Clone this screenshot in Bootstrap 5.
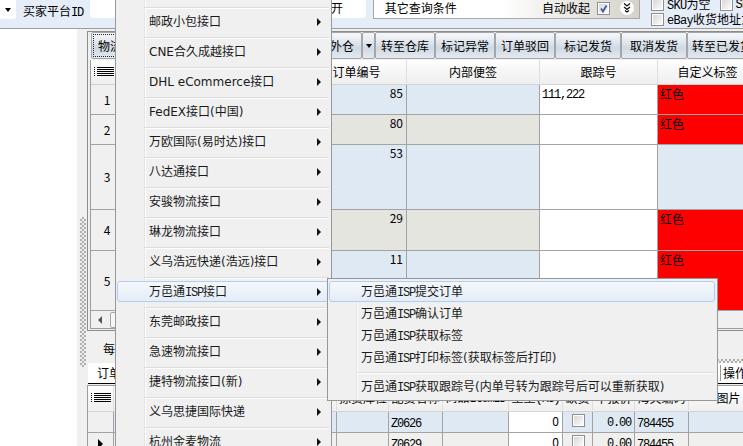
<!DOCTYPE html>
<html lang="zh-CN">
<head>
<meta charset="utf-8">
<title>订单管理</title>
<link rel="stylesheet" href="https://cdn.jsdelivr.net/npm/bootstrap@5.3.0/dist/css/bootstrap.min.css">
<style>
html,body{margin:0;width:743px;height:446px;overflow:hidden;background:#f0f0f0}
body{font:12px/16px "Noto Sans CJK SC","Liberation Sans",sans-serif;color:#000}
.lat{font-family:"Liberation Mono","Noto Sans CJK SC",monospace;letter-spacing:-1.2px}
.desk{width:743px;height:446px;position:relative;overflow:hidden}
.topbar{height:29px;background:#e5edf9;border-bottom:1px solid #9c9c9c;overflow:hidden}
.sel-end{width:16px;height:19px;background:#fff;border-radius:0 0 3px 0}
.caret-d{border-left:3px solid transparent;border-right:3px solid transparent;border-top:4px solid #000;margin-top:1px}
.lbl-id{margin:3px 8px 0 7px;width:59px;white-space:nowrap}
.inp{width:276px;height:18px;background:#fff;border-radius:0 0 3px 3px;padding:0 0 0 241px}
.qpanel{margin-left:7px;width:268px;height:19px;background:linear-gradient(90deg,#fff 0,#fff 48%,#d5d2ca 100%);border:1px solid #a9a9a9;border-top:0;padding:0 2px 2px 11px;align-items:center}
.qpanel .t2{margin-left:auto;margin-right:7px}
.circ{width:14px;height:14px;border-radius:50%;background:#fff;margin:-1px 3px 0 10px}
.ck{display:inline-block;width:13px;height:13px;flex:none;border:1px solid #8f8f8f;background:linear-gradient(135deg,#d4d4d4,#fff);box-shadow:inset 0 0 0 1px #fff}
.ck svg{display:block}
.ops{margin-left:11px;margin-top:-3px;width:92px;white-space:nowrap}
.ops>div{height:15px;align-items:center}
.ops .ck{margin-right:3px}
.ops .ck.next{margin-left:9px}
.ops .lat{letter-spacing:-.7px}
.mainrow{height:417px}
.leftw{width:77px;background:#fff}
.gutter{width:10px;background:#f0f0f0;padding-left:3px}
.dots{width:6px;height:150px;margin-top:188px;background:repeating-conic-gradient(#adadad 0 25%,#f0f0f0 0 50%) 0 0/4px 4px}
.content{width:656px}
.frame{margin-top:2px;border:1px solid #8c8c8c;border-right:0;padding:0 0 1px 2px}
.tools{height:28px;padding-left:1px}
.tb{height:27px;padding:0;font-size:12px;line-height:14px;color:#000;border:1px solid #a4a6a9;border-radius:2px;flex:none;white-space:nowrap;background:linear-gradient(#f5f7fa 0,#e9edf2 25%,#cfd8e3 60%,#e4e9ef 100%)}
.tb.first{width:207px;text-align:left;padding-left:6px;outline:1px dotted #222;outline-offset:-3px}
.tb.w64{width:64px}.tb.w13{width:13px}.tb.w60{width:60px}.tb.w66{width:66px}.tb.w70{width:70px}
.tb.arrow{display:flex;align-items:center;justify-content:center}
.gridwrap{border:1px solid #9c9c9c;border-width:0 0 1px 1px;overflow:hidden}
.gt.table{table-layout:fixed;margin:0;border-collapse:separate;border-spacing:0}
.gt.table>:not(caption)>*>*{padding:0 2px;border:0;border-right:1px solid #a3a3a3;border-bottom:1px solid #a3a3a3;vertical-align:top;background-color:#f0f0f0;box-shadow:none;color:#000;font-size:12px;line-height:16px;overflow:hidden;white-space:nowrap}
.gt.table>thead>tr>th{font-weight:400;text-align:center;vertical-align:middle;background:linear-gradient(#fff 0,#f6f6f6 45%,#efefef 100%);border-right:1px solid #dedede;border-bottom:1px solid #d4d4d4}
.gt.table>thead>tr>th.ico{padding:0 0 0 3px}
.gt.table>tbody>tr>td.rh{text-align:center;vertical-align:middle;padding:0}
.gt.table>tbody>tr>td.blue{background-color:#dfe9f4}
.gt.table>tbody>tr>td.grey{background-color:#e5e5e0}
.gt.table>tbody>tr>td.wh{background-color:#fff}
.gt.table>tbody>tr>td.red{background-color:#f00;padding-left:2px;padding-top:1px}
.gt.table>tbody>tr>td.lite{background-color:#f0f0ee}
.g1{width:667px}
.g2{width:681px}
.num{text-align:right}
.gt.table>tbody>tr>td.num{padding-right:3px}
.gt.table>tbody>tr>td.pt2{padding-top:2px}
.g2.table>tbody>tr>td.num{padding-top:1px}
.r1{height:30px}.r3{height:65px}.r4{height:41px}.r5{height:60px}.hd1{height:25px}.hd2{height:26px}.r2g{height:18px}
.hlines{display:block}
.sbar{height:17px;background:#f0f0f0;align-items:center}
.sb-l{width:17px;height:17px;display:flex;align-items:center;justify-content:center}
.tri-l{border-top:4px solid transparent;border-bottom:4px solid transparent;border-right:4px solid #555}
.sb-t{width:210px;height:16px;margin-left:2px;border:1px solid #a8a8a8;border-radius:2px;background:linear-gradient(90deg,#f7f7f7,#dcdcdc)}
.pagebar{height:32px}
.pagebar .mei{padding:10px 0 0 16px;height:28px;white-space:nowrap}
.dotline{height:4px;width:300px;margin-left:auto;background:repeating-conic-gradient(#adadad 0 25%,#f0f0f0 0 50%) 0 0/4px 4px}
.tabs{height:23px;margin-left:1px;background:#fff;border-bottom:1px solid #000;align-items:center}
.tabs .one{padding-left:9px}
.tabs .two{margin-left:auto;width:23px;height:16px;border-left:1px solid #9a9a9a;padding-left:2px;overflow:hidden;white-space:nowrap}
.grid2{margin-top:1px;border-top:1px solid #9c9c9c;border-left:1px solid #9c9c9c;overflow:hidden}
.tri-r{display:inline-block;border-top:5px solid transparent;border-bottom:5px solid transparent;border-left:5px solid #000;vertical-align:middle}
.boxck{display:block;margin:2px auto 0 7px;width:13px;height:13px}
.dropdown-menu.m1{position:absolute;left:115px;top:0;width:217px;min-width:0;margin:0;padding:7px 0 0;height:460px;border:0;border-left:1px solid #979797;border-right:1px solid #979797;border-radius:0;font-size:12px;z-index:5;background:linear-gradient(#e4e4e4,#e4e4e4) no-repeat 28px 0/1px 100%,linear-gradient(#fff,#fff) no-repeat 29px 0/1px 100%,#f0f0f0}
.dropdown-menu.m2{position:absolute;left:327px;top:278px;width:391px;min-width:0;margin:0;padding:2px 0;border:1px solid #979797;border-radius:0;font-size:12px;z-index:6;background:linear-gradient(#e4e4e4,#e4e4e4) no-repeat 28px 0/1px 100%,linear-gradient(#fff,#fff) no-repeat 29px 0/1px 100%,#f0f0f0}
.m1 .mit{display:block;height:30px;padding:4px 2px 5px 1px;background:linear-gradient(#dcdcdc,#dcdcdc) no-repeat 29px 0/calc(100% - 31px) 1px,linear-gradient(#fff,#fff) no-repeat 29px 1px/calc(100% - 31px) 1px}
.mi-in{display:flex;align-items:center;height:21px;border:1px solid transparent;border-radius:3px;color:#1a1a1a;white-space:nowrap;font-family:"DejaVu Sans","Noto Sans CJK SC",sans-serif;font-size:12px}
.m1 .mi-in{padding:0 7px 0 31px;justify-content:space-between}
.m2 .mit{display:block;height:22px;padding:0 2px 1px 1px}
.m2 .mi-in{padding-left:31px}
.mi-in>span:not(.tri-m){margin-top:2px}
.mi-in.on{background:linear-gradient(#f5f8fc,#e4ecf7);border-color:#aeceF7}
.tri-m{border-top:4px solid transparent;border-bottom:4px solid transparent;border-left:4px solid #111;flex:none}
.sep2{height:7px;padding:0;margin:0 2px 0 29px;border:0;background:linear-gradient(#dcdcdc,#dcdcdc) no-repeat 0 3px/100% 1px,linear-gradient(#fff,#fff) no-repeat 0 4px/100% 1px;opacity:1}
</style>
</head>
<body>
<div class="desk">
  <div class="topbar d-flex align-items-start">
    <div class="sel-end d-flex align-items-center justify-content-center"><span class="caret-d"></span></div>
    <div class="lbl-id">买家平台<span class="lat">ID</span></div>
    <div class="inp">开</div>
    <div class="qpanel d-flex">
      <span>其它查询条件</span>
      <span class="t2">自动收起</span>
      <span class="ck"><svg width="11" height="11" viewBox="0 0 11 11"><path d="M3 5.5 5 8.5 8.5 2.5" fill="none" stroke="#3f5aa8" stroke-width="1.8"/></svg></span>
      <span class="circ d-flex align-items-center justify-content-center"><svg width="10" height="11" viewBox="0 0 10 11"><path d="M2 1.5 5 4 8 1.5M2 5 5 7.5 8 5M3 8.5 5 10 7 8.5" fill="none" stroke="#111" stroke-width="1.3"/></svg></span>
    </div>
    <div class="ops">
      <div class="d-flex"><span class="ck"></span><span><span class="lat">SKU</span>为空</span><span class="ck next"></span><span class="lat">SKU</span></div>
      <div class="d-flex"><span class="ck"></span><span><span class="lat">eBay</span>收货地址为空</span></div>
    </div>
  </div>

  <div class="mainrow d-flex">
    <div class="leftw"></div>
    <div class="gutter"><div class="dots"></div></div>
    <div class="content d-flex flex-column">
      <div class="frame">
        <div class="tools d-flex">
          <button class="btn tb first" type="button">物流接口</button>
          <button class="btn tb w64" type="button">转至外仓</button>
          <button class="btn tb w13 arrow" type="button"><span class="caret-d"></span></button>
          <button class="btn tb w60" type="button">转至仓库</button>
          <button class="btn tb w60" type="button">标记异常</button>
          <button class="btn tb w60" type="button">订单驳回</button>
          <button class="btn tb w66" type="button">标记发货</button>
          <button class="btn tb w66" type="button">取消发货</button>
          <button class="btn tb w70" type="button">转至已发货</button>
        </div>
        <div class="gridwrap">
          <table class="table gt g1">
            <colgroup><col style="width:33px"><col style="width:183px"><col style="width:100px"><col style="width:133px"><col style="width:118px"><col style="width:100px"></colgroup>
            <thead><tr class="hd1">
              <th class="ico"><svg class="hlines" width="20" height="10" viewBox="0 0 20 10" shape-rendering="crispEdges"><path d="M0 .5h1M3 .5h17M0 2.5h1M3 2.5h17M0 4.5h1M3 4.5h17M0 6.5h1M3 6.5h17M0 8.5h1M3 8.5h17" stroke="#000" stroke-width="1" fill="none"/></svg></th>
              <th></th><th>订单编号</th><th>内部便签</th><th>跟踪号</th><th>自定义标签</th>
            </tr></thead>
            <tbody>
              <tr class="r1"><td class="rh">1</td><td></td><td class="blue num">85</td><td class="blue"></td><td class="wh"><span class="lat">111,222</span></td><td class="red">红色</td></tr>
              <tr class="r1"><td class="rh">2</td><td></td><td class="grey num">80</td><td class="grey"></td><td class="wh"></td><td class="red">红色</td></tr>
              <tr class="r3"><td class="rh">3</td><td></td><td class="blue num">53</td><td class="blue"></td><td class="wh"></td><td class="blue"></td></tr>
              <tr class="r4"><td class="rh">4</td><td></td><td class="grey num">29</td><td class="grey"></td><td class="wh"></td><td class="red">红色</td></tr>
              <tr class="r5"><td class="rh">5</td><td></td><td class="blue num">11</td><td class="blue"></td><td class="wh"></td><td class="red">红色</td></tr>
            </tbody>
          </table>
          <div class="sbar d-flex"><div class="sb-l"><span class="tri-l"></span></div><div class="sb-t"></div></div>
        </div>
      </div>
      <div class="pagebar d-flex flex-column">
        <div class="mei">每页显示</div>
        <div class="dotline"></div>
      </div>
      <div class="tabs d-flex">
        <div class="one">订单明细</div>
        <div class="two">操作</div>
      </div>
      <div class="grid2">
        <table class="table gt g2">
          <colgroup><col style="width:26px"><col style="width:223px"><col style="width:52px"><col style="width:54px"><col style="width:66px"><col style="width:54px"><col style="width:30px"><col style="width:42px"><col style="width:54px"><col style="width:80px"></colgroup>
          <thead><tr class="hd2">
            <th class="ico"><svg class="hlines" width="20" height="10" viewBox="0 0 20 10" shape-rendering="crispEdges"><path d="M0 .5h1M3 .5h17M0 2.5h1M3 2.5h17M0 4.5h1M3 4.5h17M0 6.5h1M3 6.5h17M0 8.5h1M3 8.5h17" stroke="#000" stroke-width="1" fill="none"/></svg></th>
            <th></th><th>拣货库位</th><th>配货名称</th><th>商品<span class="lat">ItemID</span></th><th>重量<span class="lat">(KG)</span></th><th>缺货</th><th>申报价</th><th>海关编码</th><th>图片</th>
          </tr></thead>
          <tbody>
            <tr class="r2g"><td class="rh"></td><td class="blue"></td><td class="blue"></td><td class="blue pt2"><span class="lat">Z0626</span></td><td class="blue"></td><td class="wh num">0</td><td class="blue"><span class="ck boxck"></span></td><td class="blue num"><span class="lat">0.00</span></td><td class="blue pt2"><span class="lat">784455</span></td><td class="blue"></td></tr>
            <tr class="r2g"><td class="rh"><span class="tri-r"></span></td><td class="lite"></td><td class="lite"></td><td class="lite pt2"><span class="lat">Z0629</span></td><td class="lite"></td><td class="wh num">0</td><td class="lite"><span class="ck boxck"></span></td><td class="lite num"><span class="lat">0.00</span></td><td class="lite pt2"><span class="lat">784455</span></td><td class="lite"></td></tr>
          </tbody>
        </table>
      </div>
    </div>
  </div>

  <ul class="dropdown-menu show m1 list-unstyled">
    <li class="mit"><span class="mi-in">邮政小包接口<span class="tri-m"></span></span></li>
    <li class="mit"><span class="mi-in">CNE合久成越接口<span class="tri-m"></span></span></li>
    <li class="mit"><span class="mi-in">DHL eCommerce接口<span class="tri-m"></span></span></li>
    <li class="mit"><span class="mi-in">FedEX接口(中国)<span class="tri-m"></span></span></li>
    <li class="mit"><span class="mi-in">万欧国际(易时达)接口<span class="tri-m"></span></span></li>
    <li class="mit"><span class="mi-in">八达通接口<span class="tri-m"></span></span></li>
    <li class="mit"><span class="mi-in">安骏物流接口<span class="tri-m"></span></span></li>
    <li class="mit"><span class="mi-in">琳龙物流接口<span class="tri-m"></span></span></li>
    <li class="mit"><span class="mi-in">义乌浩远快递(浩远)接口<span class="tri-m"></span></span></li>
    <li class="mit"><span class="mi-in on"><span>万邑通<span class="lat">ISP</span>接口</span><span class="tri-m"></span></span></li>
    <li class="mit"><span class="mi-in">东莞邮政接口<span class="tri-m"></span></span></li>
    <li class="mit"><span class="mi-in">急速物流接口<span class="tri-m"></span></span></li>
    <li class="mit"><span class="mi-in">捷特物流接口(新)<span class="tri-m"></span></span></li>
    <li class="mit"><span class="mi-in">义乌思捷国际快递<span class="tri-m"></span></span></li>
    <li class="mit"><span class="mi-in">杭州金麦物流<span class="tri-m"></span></span></li>
  </ul>

  <ul class="dropdown-menu show m2 list-unstyled">
    <li class="mit"><span class="mi-in on"><span>万邑通<span class="lat">ISP</span>提交订单</span></span></li>
    <li class="mit"><span class="mi-in"><span>万邑通<span class="lat">ISP</span>确认订单</span></span></li>
    <li class="mit"><span class="mi-in"><span>万邑通<span class="lat">ISP</span>获取标签</span></span></li>
    <li class="mit"><span class="mi-in"><span>万邑通<span class="lat">ISP</span>打印标签(获取标签后打印)</span></span></li>
    <li class="sep2"></li>
    <li class="mit"><span class="mi-in"><span>万邑通<span class="lat">ISP</span>获取跟踪号(内单号转为跟踪号后可以重新获取)</span></span></li>
  </ul>
</div>
<script src="https://cdn.jsdelivr.net/npm/bootstrap@5.3.0/dist/js/bootstrap.bundle.min.js"></script>
</body>
</html>
